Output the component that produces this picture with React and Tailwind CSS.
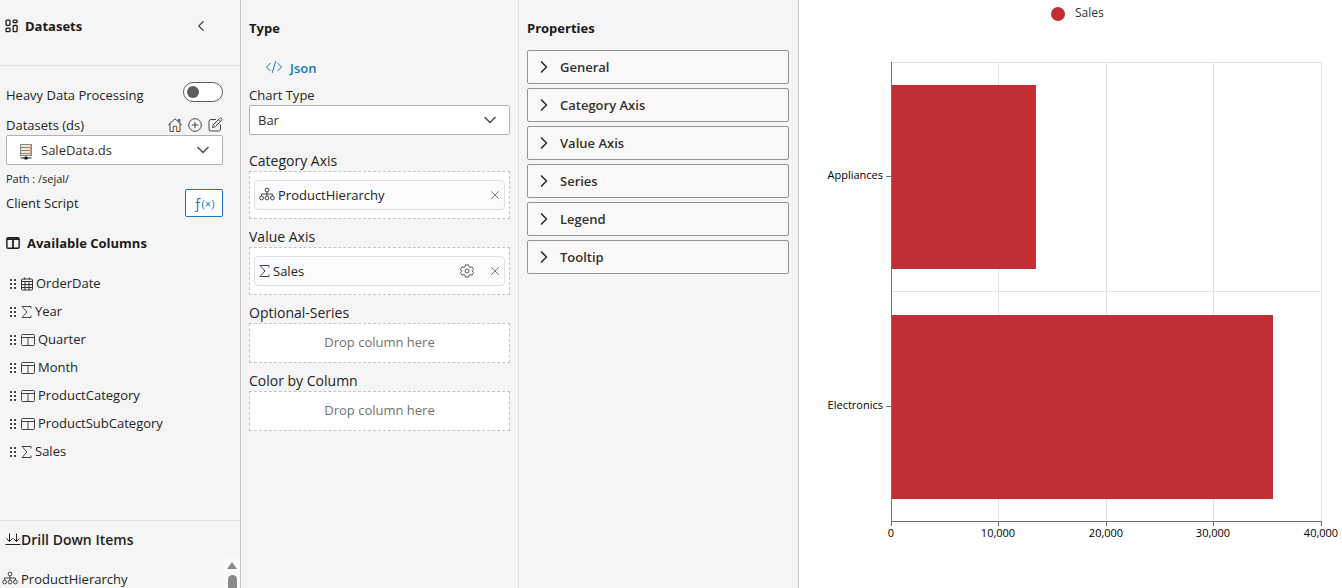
import { ChevronDown, ChevronLeft, ChevronRight, X } from 'lucide-react';

const columns = [
  { name: 'OrderDate', type: 'date' },
  { name: 'Year', type: 'number' },
  { name: 'Quarter', type: 'text' },
  { name: 'Month', type: 'text' },
  { name: 'ProductCategory', type: 'text' },
  { name: 'ProductSubCategory', type: 'text' },
  { name: 'Sales', type: 'number' },
];

const propertyGroups = ['General', 'Category Axis', 'Value Axis', 'Series', 'Legend', 'Tooltip'];

const chartData = [
  { name: 'Appliances', value: 13500 },
  { name: 'Electronics', value: 35550 },
];

const Svg = ({ children, className = '', size = 16, ...rest }) => (
  <svg
    aria-hidden="true"
    className={`shrink-0 ${className}`}
    fill="none"
    height={size}
    stroke="currentColor"
    viewBox="0 0 16 16"
    width={size}
    {...rest}
  >
    {children}
  </svg>
);

const DashboardIcon = () => (
  <Svg size={14} strokeWidth="1.5">
    <rect height="6" rx="1" width="4.5" x="1.2" y="1.2" />
    <rect height="4" rx="1" width="4.5" x="1.2" y="10.4" />
    <rect height="3" rx="1" width="4.5" x="9.3" y="1.2" />
    <rect height="7" rx="1" width="4.5" x="9.3" y="7.4" />
  </Svg>
);

const HomeIcon = () => (
  <Svg>
    <path d="M1.2 8 8 1.8 14.8 8M3 6.6v7.9h3.4V9.4h3.2v5.1H13V6.6M11.4 4.6V2.5h1.4v3.4" />
    <path d="M6.4 14.5V9.4h3.2v5.1" stroke="#b5703c" />
  </Svg>
);

const PlusCircleIcon = () => (
  <Svg>
    <circle cx="8" cy="8" r="6.3" />
    <path d="M8 4.8v6.4M4.8 8h6.4" />
  </Svg>
);

const EditIcon = () => (
  <Svg>
    <path d="M9 2.5H4A2 2 0 0 0 2 4.500v7.500a2 2 0 0 0 2 2h7.500a2 2 0 0 0 2-2V7.500" />
    <path d="m5.500 10.500.7-2.700 6.400-6.300a1.300 1.300 0 0 1 1.900 1.900L8.200 9.800zM11.400 2.700l1.900 1.900" />
  </Svg>
);

const ServerIcon = () => (
  <Svg stroke="none">
    <rect fill="#8f8983" height="12" width="12" x="2" y="0" />
    <path d="M3 1h9v2H3zM3 4h9v2H3zM3 7h9v2H3zM3 10h9v1H3z" fill="#ece4da" />
    <path d="M12 1h1v10h-1z" fill="#c9a27c" />
    <path d="M7.500 12h1v1.500h-1zM2.500 13.500h11v1h-11zM6.500 13h3v2.500h-3z" fill="#111" />
  </Svg>
);

const ColumnsIcon = () => (
  <Svg size={14} strokeWidth="1.600">
    <rect height="12" rx="1.500" width="14" x="1" y="2" />
    <path d="M1 3.500h14M8 3v11" strokeWidth="2" />
  </Svg>
);

const DragIcon = () => (
  <svg aria-hidden="true" className="shrink-0" fill="#444" height="12" viewBox="0 0 8 12" width="8">
    <path d="M1 1h2v2H1zM5 1h2v2H5zM1 5h2v2H1zM5 5h2v2H5zM1 9h2v2H1zM5 9h2v2H5z" />
  </svg>
);

const CalendarIcon = () => (
  <svg aria-hidden="true" className="shrink-0" fill="none" height="14" stroke="#333" viewBox="0 0 12 14" width="12">
    <rect height="11" rx="1" width="11" x="0.500" y="2" />
    <path d="M0.500 4.500h11M0.500 7.500h11M0.500 10.500h11M4 4.500V13M8 4.500V13M3.500 0.500v2M8.500 0.500v2" />
  </svg>
);

const SigmaIcon = () => (
  <svg aria-hidden="true" className="shrink-0" fill="none" height="14" stroke="#444" viewBox="0 0 11 14" width="11">
    <path d="M10 3.500V1.500H1L6 7l-5 5.500h9v-2" />
  </svg>
);

const TableIcon = () => (
  <svg aria-hidden="true" className="shrink-0" fill="none" height="14" stroke="#444" viewBox="0 0 14 14" width="14">
    <rect height="11" rx="1" width="13" x="0.500" y="1.500" />
    <path d="M0.500 4.500h13M7 4.500v8" />
  </svg>
);

const HierarchyIcon = () => (
  <Svg stroke="#444">
    <circle cx="8" cy="3" r="1.900" />
    <circle cx="2.600" cy="11" r="1.900" />
    <circle cx="8" cy="11" r="1.900" />
    <circle cx="13.400" cy="11" r="1.900" />
    <path d="M8 5v4M2.600 9V7h10.800v2" />
  </Svg>
);

const DrillDownIcon = () => (
  <Svg>
    <path d="M4.500 2.500v8M1.500 7.500l3 3 3-3M11.500 2.500v8M8.500 7.500l3 3 3-3M0.500 13.500h15" />
  </Svg>
);

const CodeIcon = () => (
  <svg aria-hidden="true" fill="none" height="14" stroke="currentColor" viewBox="0 0 18 14" width="18">
    <path d="M5.500 2 1.500 6l4 4M12.500 2l4 4-4 4M10.800 0 7.200 12" />
  </svg>
);

const GearIcon = () => (
  <Svg size={14}>
    <path d="M6.200 1h3.600l.5 2.200 1.300.7 2.100-.7 1.800 3.100L13.900 8l1.600 1.700-1.800 3.100-2.100-.7-1.300.7-.5 2.200H6.200l-.5-2.200-1.300-.7-2.100.7-1.800-3.100L2.100 8 .5 6.300l1.800-3.100 2.100.7 1.300-.7z" />
    <circle cx="8" cy="8" r="2.300" />
  </Svg>
);

const columnIcon = {
  date: CalendarIcon,
  number: SigmaIcon,
  text: TableIcon,
};

const Select = ({ children, icon: Icon, id, inset }) => (
  <div className="grid h-[30px] items-center">
    <select
      className={`col-start-1 row-start-1 h-full w-full appearance-none rounded-xs border border-[#b3b0ad] bg-white pt-0.5 text-[#323130] ${inset}`}
      id={id}
    >
      {children}
    </select>
    {Icon && (
      <span className="pointer-events-none col-start-1 row-start-1 ml-3 pt-1">
        <Icon />
      </span>
    )}
    <ChevronDown
      className="pointer-events-none col-start-1 row-start-1 mr-2.5 justify-self-end text-[#555]"
      size={20}
      strokeWidth={2}
    />
  </div>
);

const DropZone = ({ children, label }) => (
  <section>
    <h3 className="h-5 text-sm leading-5">{label}</h3>
    {children ? (
      <div className="border border-dashed border-[#c4c4c4] bg-white px-1 py-2">{children}</div>
    ) : (
      <div className="flex h-10 items-center justify-center border border-dashed border-[#c4c4c4] bg-white text-[#6f7377]">
        Drop column here
      </div>
    )}
  </section>
);

const Chip = ({ configurable, icon: Icon, name }) => (
  <div className="flex h-[30px] items-center rounded-sm border border-[#dde1e4] bg-[#f9fbfc] pr-0.5 pl-1">
    <Icon />
    <span className="ml-[3px] flex-1 pt-0.5">{name}</span>
    {configurable && (
      <button aria-label={`Configure ${name}`} className="mr-3.5 text-[#444]" type="button">
        <GearIcon />
      </button>
    )}
    <button aria-label={`Remove ${name}`} className="text-[#666]" type="button">
      <X size={14} strokeWidth={1.5} />
    </button>
  </div>
);

const Sidebar = () => (
  <aside className="flex w-[241px] shrink-0 flex-col border-r border-[#c4c4c4]">
    <header className="flex h-[66px] shrink-0 items-start justify-between border-b border-[#e3e3e3] pt-4 pr-[30px] pl-[5px]">
      <h2 className="flex h-5 items-center gap-1.5 font-bold text-[#1b1b1b]">
        <DashboardIcon />
        <span className="pt-0.5">Datasets</span>
      </h2>
      <button aria-label="Collapse datasets" className="flex h-5 items-center text-[#444]" type="button">
        <ChevronLeft size={18} strokeWidth={1.5} />
      </button>
    </header>

    <div className="shrink-0 pt-4 pr-[17px] pl-1.5">
      <div className="flex h-[33px] items-start justify-between">
        <label className="pt-[3px] leading-5" htmlFor="heavy">
          Heavy Data Processing
        </label>
        <input
          className="h-5 w-10 appearance-none rounded-full border border-[#605e5c] bg-white before:m-[3px] before:block before:size-3 before:rounded-full before:bg-[#605e5c] checked:before:ml-[23px]"
          id="heavy"
          type="checkbox"
        />
      </div>
      <div className="flex h-5 items-center justify-between">
        <label className="pt-0.5" htmlFor="dataset">
          Datasets (ds)
        </label>
        <div className="flex gap-1 text-[#444]">
          <button aria-label="Home" type="button">
            <HomeIcon />
          </button>
          <button aria-label="Add dataset" type="button">
            <PlusCircleIcon />
          </button>
          <button aria-label="Edit dataset" type="button">
            <EditIcon />
          </button>
        </div>
      </div>
      <Select icon={ServerIcon} id="dataset" inset="pl-[34px]">
        <option>SaleData.ds</option>
      </Select>
      <p className="pt-1.5 text-[11px] leading-4">Path : /sejal/</p>
      <div className="mt-0.5 flex h-7 items-center justify-between">
        <span className="pt-0.5">Client Script</span>
        <button
          aria-label="Edit client script"
          className="h-7 w-[38px] rounded-xs border border-[#1277c4] bg-white text-[#1277c4]"
          type="button"
        >
          <span className="text-sm">ƒ</span>
          <span className="text-[11px]">(×)</span>
        </button>
      </div>
    </div>

    <section className="flex min-h-0 flex-1 flex-col pt-4">
      <h2 className="flex h-5 items-center gap-[7px] pl-1.5 font-bold text-[#1b1b1b]">
        <ColumnsIcon />
        <span className="pt-0.5">Available Columns</span>
      </h2>
      <ul className="mt-[17px] min-h-0 flex-1 overflow-hidden pl-[9px]">
        {columns.map(({ name, type }) => {
          const Icon = columnIcon[type];
          return (
            <li className="flex h-7 items-center" key={name}>
              <DragIcon />
              <span className="mr-[3px] ml-1">
                <Icon />
              </span>
              {name}
            </li>
          );
        })}
      </ul>
    </section>

    <section className="h-[68px] shrink-0 overflow-hidden border-t border-[#e3e3e3] pt-2">
      <h2 className="flex h-5 items-center pl-[5px] text-sm font-semibold">
        <DrillDownIcon />
        <span className="pt-0.5">Drill Down Items</span>
      </h2>
      <div className="mt-2.5 flex justify-between">
        <p className="flex h-10 items-center gap-[3px] pl-0.5">
          <HierarchyIcon />
          <span className="pt-0.5">ProductHierarchy</span>
        </p>
        <div className="flex w-4 flex-col items-center gap-1.5 bg-[#fafafa] pt-[3px]">
          <svg aria-hidden="true" fill="#8a8a8a" height="7" viewBox="0 0 10 7" width="10">
            <path d="M5 0 10 7H0z" />
          </svg>
          <div className="h-20 w-[9px] shrink-0 rounded-full bg-[#8a8a8a]" />
        </div>
      </div>
    </section>
  </aside>
);

const TypePanel = () => (
  <section className="w-[278px] shrink-0 border-r border-[#e6e6e6] pt-[18px] pr-2 pl-2">
    <h2 className="leading-5 font-bold text-[#1b1b1b]">Type</h2>
    <button className="mt-5 ml-4 flex h-5 items-center gap-[7px] font-semibold text-[#1277c4]" type="button">
      <CodeIcon />
      <span className="pt-0.5">Json</span>
    </button>
    <label className="mt-[7px] block h-5 leading-5" htmlFor="chart-type">
      Chart Type
    </label>
    <Select id="chart-type" inset="pl-2">
      <option>Bar</option>
    </Select>
    <div className="mt-4 flex flex-col gap-2">
      <DropZone label="Category Axis">
        <Chip icon={HierarchyIcon} name="ProductHierarchy" />
      </DropZone>
      <DropZone label="Value Axis">
        <Chip configurable icon={SigmaIcon} name="Sales" />
      </DropZone>
      <DropZone label="Optional-Series" />
      <DropZone label="Color by Column" />
    </div>
  </section>
);

const PropertiesPanel = () => (
  <section className="w-[280px] shrink-0 border-r border-[#c9c9c9] pt-[18px] pr-[9px] pl-2">
    <h2 className="leading-5 font-bold text-[#1b1b1b]">Properties</h2>
    <div className="mt-3 flex flex-col gap-1">
      {propertyGroups.map((name) => (
        <button
          className="flex h-[34px] items-center gap-1.5 rounded-xs border border-[#979593] bg-[#faf9f8] pl-1.5 font-semibold text-[#323130]"
          key={name}
          type="button"
        >
          <ChevronRight size={20} strokeWidth={2} />
          <span className="pt-0.5">{name}</span>
        </button>
      ))}
    </div>
  </section>
);

const plot = { left: 92, top: 62, width: 430, height: 459, max: 40000 };
const ticks = [0, 10000, 20000, 30000, 40000];
const toX = (value) => Math.floor(plot.left + (value / plot.max) * plot.width);

const SalesChart = () => {
  const band = plot.height / chartData.length;
  const bottom = plot.top + plot.height;

  return (
    <svg aria-label="Sales by product" className="block w-full" role="img" viewBox="0 0 543 588">
      <circle cx="259" cy="14" fill="#c12e34" r="7" />
      <text fill="#333" fontSize="12" x="276" y="17">
        Sales
      </text>
      <g shapeRendering="crispEdges" stroke="#e0e4e4">
        {ticks.map((tick) => (
          <path d={`M${toX(tick) + 0.5} ${plot.top}V${bottom}`} key={tick} />
        ))}
        <path d={`M${plot.left} ${plot.top + 0.5}h${plot.width}`} />
        <path d={`M${plot.left} ${plot.top + band}h${plot.width}`} />
      </g>
      {chartData.map(({ name, value }, i) => {
        const y = Math.round(plot.top + band * i);
        const middle = y + Math.floor(band / 2);
        return (
          <g key={name}>
            <rect fill="#c12e34" height="184" width={toX(value) - plot.left} x={plot.left} y={y + 23} />
            <path d={`M${plot.left - 5} ${middle + 0.5}h5`} shapeRendering="crispEdges" stroke="#6e7079" />
            <text fill="#000" fontSize="11" textAnchor="end" x="84" y={middle + 3}>
              {name}
            </text>
          </g>
        );
      })}
      <g shapeRendering="crispEdges" stroke="#6e7079">
        <path d={`M${plot.left + 0.5} ${plot.top}V${bottom}`} />
        <path d={`M${plot.left} ${bottom + 0.5}h${plot.width}`} />
        {ticks.map((tick) => (
          <path d={`M${toX(tick) + 0.5} ${bottom}v5`} key={tick} />
        ))}
      </g>
      <g fill="#000" fontSize="11" textAnchor="middle">
        {ticks.map((tick) => (
          <text key={tick} x={toX(tick)} y="537">
            {tick.toLocaleString('en-US')}
          </text>
        ))}
      </g>
    </svg>
  );
};

export default function App() {
  return (
    <div className="flex h-screen overflow-hidden bg-[#f5f5f5] font-['Open_Sans','Noto_Sans',sans-serif] text-[13px] text-[#242424]">
      <Sidebar />
      <TypePanel />
      <PropertiesPanel />
      <main className="min-w-0 flex-1 bg-white">
        <SalesChart />
      </main>
    </div>
  );
}
